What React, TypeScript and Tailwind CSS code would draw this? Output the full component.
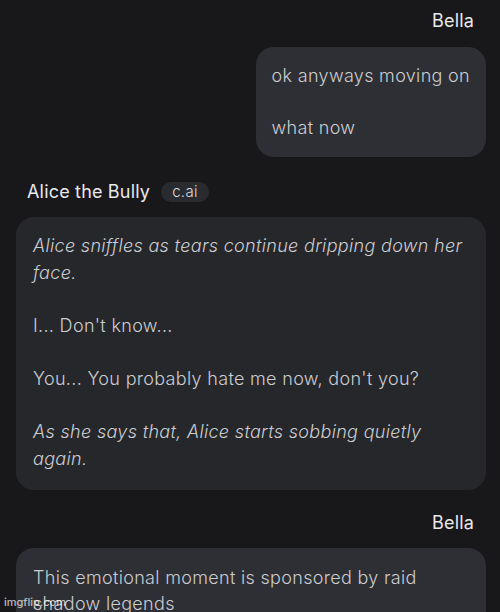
import React from "react";

// Chat transcript — two user turns around one character reply.

type Line = { text: string; italic?: boolean };

function UserName({ name }: { name: string }) {
  return (
    <div className="flex justify-end pr-[26px] text-[18px] font-normal leading-[22px] tracking-[0.01em] text-[#e8e8ea]">
      {name}
    </div>
  );
}

const aliceReply: Line[] = [
  { text: "Alice sniffles as tears continue dripping down her face.", italic: true },
  { text: "I... Don't know..." },
  { text: "You... You probably hate me now, don't you?" },
  { text: "As she says that, Alice starts sobbing quietly again.", italic: true },
];

export default function App() {
  return (
    <div
      className="relative h-[612px] w-[500px] overflow-hidden bg-[#18181b] font-light tracking-[0.02em] text-[#cbccd0]"
      style={{ fontFamily: "Inter, 'Liberation Sans', sans-serif" }}
    >
      <div className="flex flex-col pt-[10px]">
        <UserName name="Bella" />
        <div className="mr-[14px] mt-[15px] self-end rounded-[18px] bg-[#2e2f34] p-4 text-[18px] leading-[26px]">
          <div className="flex flex-col gap-[26px]">
            <p>ok anyways moving on</p>
            <p>what now</p>
          </div>
        </div>

        <div className="mt-[24px] flex items-center gap-[11px] pl-[27px]">
          <span className="text-[18px] font-normal leading-[22px] tracking-[0.01em] text-[#e8e8ea]">
            Alice the Bully
          </span>
          <span className="rounded-full bg-[#2a2b2f] px-[11px] text-[15px] leading-[20px] text-[#dcdcdf]">
            c.ai
          </span>
        </div>
        <div className="ml-4 mr-[14px] mt-[14px] rounded-[18px] bg-[#26272b] px-[17px] pb-[18px] pt-4 text-[18px] leading-[26.6px]">
          <div className="flex flex-col gap-[26.6px]">
            {aliceReply.map((l, i) => (
              <p key={i} className={l.italic ? "italic" : ""}>
                {l.text}
              </p>
            ))}
          </div>
        </div>

        <div className="mt-[22px]">
          <UserName name="Bella" />
        </div>
        <div className="mr-[14px] mt-[14px] max-w-[470px] self-end rounded-[18px] bg-[#2e2f34] px-[17px] pb-4 pt-[17px] text-[18px] leading-[26px]">
          <p>This emotional moment is sponsored by raid shadow legends</p>
        </div>
      </div>

      <span className="absolute bottom-[3px] left-[4px] text-[11px] font-medium leading-[13px] tracking-normal text-white/70">
        imgflip.com
      </span>
    </div>
  );
}
